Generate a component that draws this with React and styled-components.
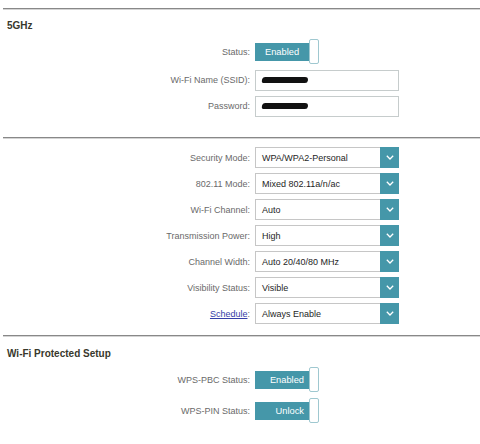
import React from "react";
import styled, { createGlobalStyle } from "styled-components";

const GlobalStyle = createGlobalStyle`
  html, body {
    margin: 0;
    padding: 0;
    background: #fff;
  }
  body {
    font-family: "Liberation Sans", Arial, sans-serif;
  }
`;

const TEAL = "#4597a9";

const Page = styled.div`
  width: 480px;
  height: 444px;
  overflow: hidden;
  background: #fff;
`;

const Divider = styled.div`
  height: 2px;
  margin: ${(p) => p.$top}px 0 0 3px;
  background: #888;
  border-bottom: 1px solid #d4d4d4;
  box-sizing: border-box;
`;

const Heading = styled.h3`
  margin: ${(p) => p.$top}px 0 0 7px;
  font-size: 10px;
  line-height: 12px;
  font-weight: 700;
  color: #38382c;
`;

const Form = styled.div`
  display: flex;
  flex-direction: column;
  margin-top: ${(p) => p.$top}px;
`;

const Row = styled.div`
  display: grid;
  grid-template-columns: 250px auto;
  column-gap: 5px;
  align-items: center;
  height: ${(p) => p.$h}px;
`;

const Label = styled.div`
  text-align: right;
  font-size: 9px;
  color: #6a6a6a;
  white-space: nowrap;
`;

const Link = styled.a`
  color: #3440a8;
  text-decoration: underline;
`;

const Toggle = styled.div`
  display: flex;
  align-items: center;
`;

const ToggleFace = styled.div`
  width: 54px;
  height: 18px;
  background: ${TEAL};
  color: #fff;
  font-size: 9.3px;
  display: flex;
  align-items: center;
  justify-content: ${(p) => (p.$offset ? "flex-end" : "center")};
  padding-right: ${(p) => (p.$offset ? 5 : 0)}px;
  box-sizing: border-box;
`;

const Knob = styled.div`
  width: 10px;
  height: 25px;
  background: #fff;
  border: 1px solid #9fc8d0;
  border-radius: 2px;
  box-sizing: border-box;
`;

const TextBox = styled.div`
  width: 144px;
  height: 21px;
  border: 1px solid #c6cccc;
  box-sizing: border-box;
  display: flex;
  align-items: center;
  padding-left: 6px;
`;

const Redacted = styled.span`
  display: block;
  width: ${(p) => p.$w}px;
  height: 6px;
  background: #111;
  border-radius: 3px 4px 3px 2px;
  transform: skewX(-8deg);
`;

const Select = styled.div`
  width: 144px;
  height: 21px;
  border: 1px solid #c6c6c6;
  box-sizing: border-box;
  display: flex;
  align-items: stretch;
`;

const SelectValue = styled.div`
  flex: 1;
  display: flex;
  align-items: center;
  padding-left: 6px;
  font-size: 9px;
  color: #1e1e1e;
  white-space: nowrap;
`;

const Arrow = styled.div`
  width: 19px;
  margin: -1px -1px -1px 0;
  background: ${TEAL};
  display: flex;
  align-items: center;
  justify-content: center;
`;

const Chevron = () => (
  <svg width="8" height="5" viewBox="0 0 8 5">
    <polyline points="0.8,0.8 4,4 7.2,0.8" fill="none" stroke="#fff" strokeWidth="1.3" />
  </svg>
);

const selects = [
  { label: "Security Mode:", value: "WPA/WPA2-Personal" },
  { label: "802.11 Mode:", value: "Mixed 802.11a/n/ac" },
  { label: "Wi-Fi Channel:", value: "Auto" },
  { label: "Transmission Power:", value: "High" },
  { label: "Channel Width:", value: "Auto 20/40/80 MHz" },
  { label: "Visibility Status:", value: "Visible" },
  { label: "link", value: "Always Enable" },
];

function ToggleSwitch({ text, offset }) {
  return (
    <Toggle>
      <ToggleFace $offset={offset}>{text}</ToggleFace>
      <Knob />
    </Toggle>
  );
}

export default function App() {
  return (
    <Page>
      <GlobalStyle />
      <Divider $top={8} />
      <Heading $top={10}>5GHz</Heading>
      <Form $top={4}>
        <Row $h={31}>
          <Label>Status:</Label>
          <ToggleSwitch text="Enabled" />
        </Row>
        <Row $h={26}>
          <Label>Wi-Fi Name (SSID):</Label>
          <TextBox>
            <Redacted $w={46} />
          </TextBox>
        </Row>
        <Row $h={26}>
          <Label>Password:</Label>
          <TextBox>
            <Redacted $w={46} />
          </TextBox>
        </Row>
      </Form>

      <Divider $top={18} />
      <Form $top={5.5}>
        {selects.map((s) => (
          <Row $h={26} key={s.value}>
            <Label>
              {s.label === "link" ? (
                <>
                  <Link href="#">Schedule</Link>:
                </>
              ) : (
                s.label
              )}
            </Label>
            <Select>
              <SelectValue>{s.value}</SelectValue>
              <Arrow>
                <Chevron />
              </Arrow>
            </Select>
          </Row>
        ))}
      </Form>

      <Divider $top={8.5} />
      <Heading $top={11}>Wi-Fi Protected Setup</Heading>
      <Form $top={4}>
        <Row $h={31}>
          <Label>WPS-PBC Status:</Label>
          <ToggleSwitch text="Enabled" offset />
        </Row>
        <Row $h={31}>
          <Label>WPS-PIN Status:</Label>
          <ToggleSwitch text="Unlock" offset />
        </Row>
      </Form>
    </Page>
  );
}
